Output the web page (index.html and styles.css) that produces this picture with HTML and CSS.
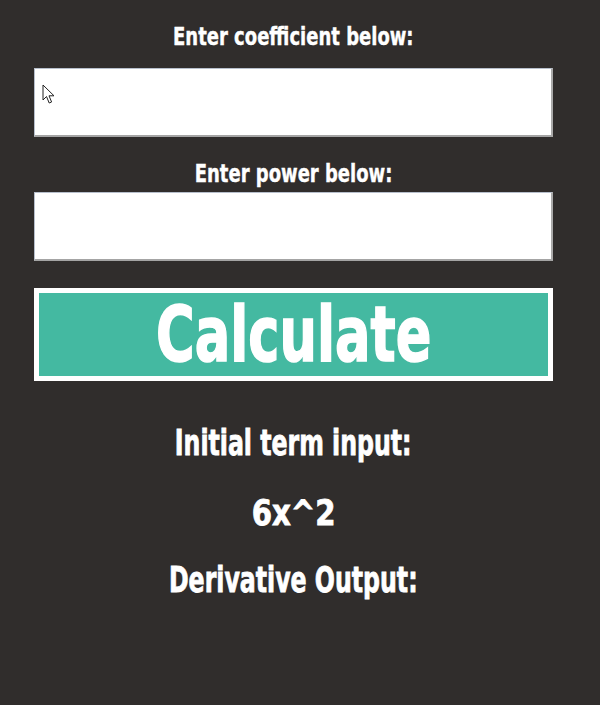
FILE: index.html
```html
<!DOCTYPE html>
<html lang="en">
<head>
<meta charset="utf-8">
<title>Derivative Calculator</title>
<link rel="stylesheet" href="styles.css">
</head>
<body>
<main class="app">
  <label class="label label-first" for="coef"><span class="squeeze sq-label">Enter coefficient below:</span></label>
  <div class="field-wrap">
    <input id="coef" class="field" type="text">
    <svg class="pointer" width="13" height="21" viewBox="0 0 13 21" aria-hidden="true">
      <path d="M1 1 L1 16 L4.5 12.5 L7.2 19 L9.6 18 L7 11.8 L12 11.8 Z" fill="#ffffff" stroke="#222222" stroke-width="1" stroke-linejoin="miter"/>
    </svg>
  </div>
  <label class="label label-second" for="pow"><span class="squeeze sq-label">Enter power below:</span></label>
  <input id="pow" class="field field-second" type="text">
  <button class="calc" type="button"><span class="squeeze sq-calc">Calculate</span></button>
  <p class="heading heading-first"><span class="squeeze sq-head">Initial term input:</span></p>
  <p class="term"><span class="squeeze sq-term">6x^2</span></p>
  <p class="heading heading-last"><span class="squeeze sq-head">Derivative Output:</span></p>
</main>
</body>
</html>
```

FILE: styles.css
```css
html, body {
  margin: 0;
  padding: 0;
  background: #302d2c;
}

body {
  width: 600px;
  height: 705px;
  overflow: hidden;
  font-family: "DejaVu Sans Condensed", "DejaVu Sans", "Liberation Sans", Arial, sans-serif;
  font-weight: bold;
  color: #ffffff;
}

.app {
  width: 587px;
  display: flex;
  flex-direction: column;
  align-items: center;
  padding: 24px 0 0;
}

.squeeze {
  display: inline-block;
  white-space: nowrap;
  transform-origin: center center;
}

.sq-label {
  transform: scaleX(0.8);
  -webkit-text-stroke: 0.4px #ffffff;
}

.sq-calc {
  transform: scaleX(0.77);
  -webkit-text-stroke: 1.5px #ffffff;
}

.sq-head {
  transform: scaleX(0.73);
  -webkit-text-stroke: 0.8px #ffffff;
}

.sq-term {
  transform: scaleX(0.9);
  -webkit-text-stroke: 0.8px #ffffff;
}

.label {
  display: block;
  font-size: 25px;
  line-height: 25px;
  height: 25px;
  white-space: nowrap;
}

.label-second {
  margin-top: 24px;
}

.field-wrap {
  position: relative;
  margin-top: 19px;
  width: 519px;
  height: 69px;
}

.field {
  display: block;
  box-sizing: border-box;
  width: 519px;
  height: 69px;
  margin: 0;
  padding: 0 8px;
  background: #ffffff;
  border-top: 1px solid #b7bfcc;
  border-left: 1px solid #b7bfcc;
  border-right: 2px solid #a9a9a9;
  border-bottom: 2px solid #a4a4a4;
  border-radius: 0;
  outline: none;
  font-family: "Liberation Sans", Arial, sans-serif;
  font-size: 20px;
}

.field-second {
  margin-top: 6px;
}

.pointer {
  position: absolute;
  left: 8px;
  top: 16px;
}

.calc {
  display: block;
  box-sizing: border-box;
  margin-top: 27px;
  width: 519px;
  height: 93px;
  padding: 0;
  background: #44b9a1;
  border: 5px solid #ffffff;
  border-radius: 0;
  color: #ffffff;
  font-family: inherit;
  font-weight: bold;
  font-size: 76px;
  line-height: 76px;
  cursor: pointer;
}

.heading,
.term {
  margin: 0;
  font-size: 36px;
  line-height: 36px;
  height: 36px;
  white-space: nowrap;
  text-align: center;
}

.heading-first {
  margin-top: 44px;
}

.term {
  margin-top: 34px;
}

.heading-last {
  margin-top: 31px;
}
```
